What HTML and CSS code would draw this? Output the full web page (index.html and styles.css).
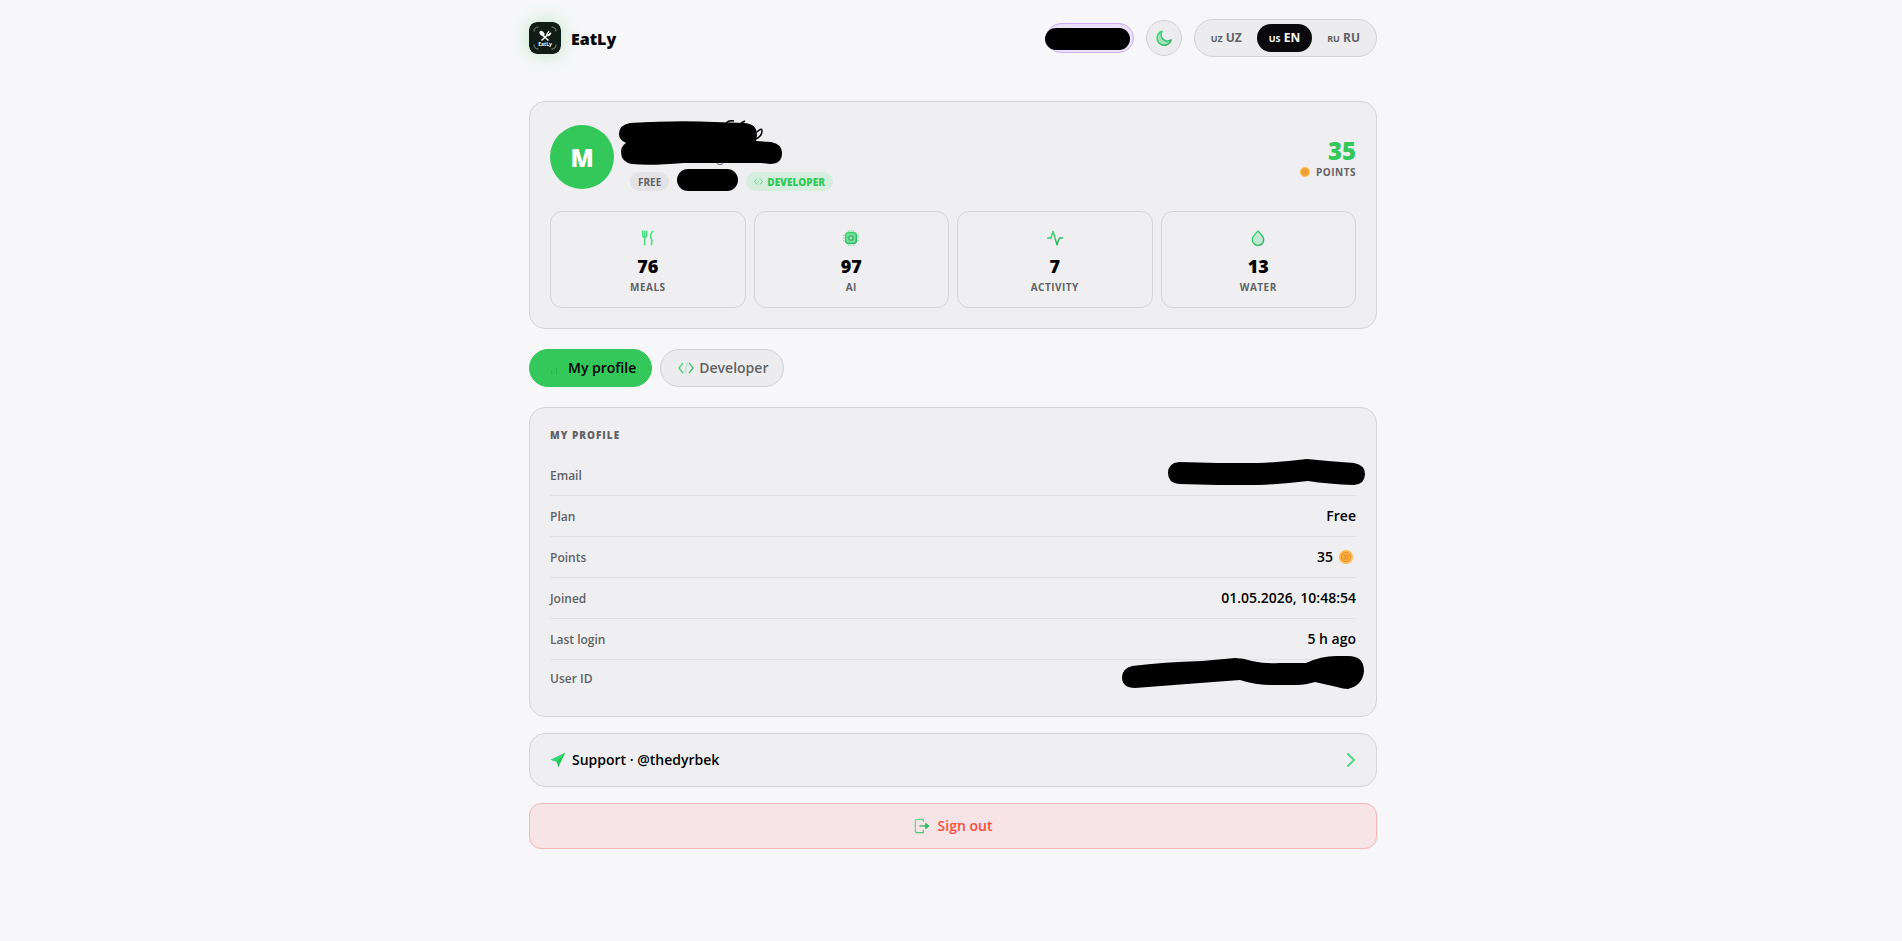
FILE: index.html
```html
<!DOCTYPE html>
<html lang="en">
<head>
<meta charset="utf-8">
<title>EatLy</title>
<link rel="stylesheet" href="styles.css">
</head>
<body>
<svg class="defs" width="0" height="0" aria-hidden="true">
  <defs>
    <linearGradient id="leaf" x1="0" y1="0" x2="24" y2="24" gradientUnits="userSpaceOnUse">
      <stop offset="0" stop-color="#4ade80"/><stop offset="1" stop-color="#22a855"/>
    </linearGradient>
    <symbol id="coin" viewBox="0 0 24 24">
      <circle cx="12" cy="12" r="12" fill="#ffb94a"/>
      <circle cx="12" cy="12" r="8" fill="#fbab40" stroke="#e08f2c" stroke-width="1.600"/>
      <path d="M8.500 9h7M9 9v6.500M12 9v6.500M15 9v6.500M8.500 15.500h7" fill="none" stroke="#e08f2c" stroke-width="1.400"/>
    </symbol>
    <symbol id="code" viewBox="0 0 24 24">
      <path d="M7 5 1.500 12 7 19M17 5l5.500 7-5.500 7" fill="none" stroke="url(#leaf)" stroke-opacity=".85" stroke-width="2.200" stroke-linecap="round" stroke-linejoin="round"/>
      <path d="M13.500 4.500l-3 15" fill="none" stroke="#4ade80" stroke-opacity=".35" stroke-width="2" stroke-linecap="round"/>
    </symbol>
  </defs>
</svg>
<div class="page">
  <header class="topbar">
    <a class="brand" href="#">
      <svg class="logo" viewBox="0 0 32 32" aria-hidden="true">
        <rect width="32" height="32" rx="8" fill="#101c16"/>
        <path d="M5 9.500Q5 5 9.500 5M22.500 5Q27 5 27 9.500M27 22.500Q27 27 22.500 27M9.500 27Q5 27 5 22.500" fill="none" stroke="#829088" stroke-width="1"/>
        <path d="M13 12.500l6.500 6M19 12.500l-6.500 6" stroke="#fff" stroke-width="1.500"/>
        <ellipse cx="13" cy="11.500" rx="2" ry="3" transform="rotate(-42 13 11.500)" fill="#fff"/>
        <path d="M17.500 12.500l2.600-3.300M18.700 13.600l3-3M17.500 12.500q1 2 3 .600l1.500-2" fill="none" stroke="#fff" stroke-width="1.200"/>
        <text class="logo-text" x="16" y="23.500" text-anchor="middle">EatLy</text>
      </svg>
      <span class="brand-name">EatLy</span>
    </a>
    <div class="tools">
      <span class="account"><svg class="ink account-ink" viewBox="0 0 86 22" aria-hidden="true"><rect width="85" height="22" rx="11"/></svg></span>
      <button class="theme" type="button" aria-label="Dark theme">
        <svg width="18" height="18" viewBox="0 0 24 24" aria-hidden="true"><path d="M9.500 3A9.500 9.500 0 1 0 21.500 14.500 8.500 8.500 0 0 1 9.500 3z" fill="#4ade80" fill-opacity=".45" stroke="url(#leaf)" stroke-width="2" stroke-linejoin="round"/></svg>
      </button>
      <div class="langs">
        <button class="lang" type="button"><small>UZ</small> UZ</button>
        <button class="lang lang-on" type="button"><small>US</small> EN</button>
        <button class="lang" type="button"><small>RU</small> RU</button>
      </div>
    </div>
  </header>

  <main>
    <section class="card summary">
      <div class="person">
        <div class="avatar">M</div>
        <div class="who">
          <div class="name"></div>
          <div class="mail"><span>@gmail.com</span></div>
          <div class="badges">
            <span class="badge">FREE</span>
            <span class="badge badge-hidden"><svg class="ink badge-ink" viewBox="0 0 61 22" aria-hidden="true"><rect width="61" height="22" rx="11"/></svg></span>
            <span class="badge badge-dev"><svg width="9" height="9" aria-hidden="true"><use href="#code"/></svg>DEVELOPER</span>
          </div>
          <svg class="ink who-ink" viewBox="0 0 164 46" aria-hidden="true">
            <path d="M11 3Q60 0 95 2l31 1q12 1 12 12l-1 6 15 1q11 2 11 11 0 11-12 11l-9-1H65Q30 46 13 44 2 42 2 32q0-6 5-9Q0 20 0 14 0 5 11 3z"/>
            <path d="M107 3q3-3 8-2M122 3l4-2M138 12q5-5 5-1 0 5-6 8" fill="none" stroke="#000" stroke-width="1.500"/>
          </svg>
        </div>
        <div class="score">
          <strong>35</strong>
          <span><svg width="10" height="10" aria-hidden="true"><use href="#coin"/></svg>POINTS</span>
        </div>
      </div>
      <div class="stats">
        <div class="stat">
          <svg viewBox="0 0 24 24" aria-hidden="true"><path d="M4 2v6q0 3 3 3t3-3V2M7 2v20M17 22q2-4 0-9-2-3-.500-7 1-3 2.500-4" fill="none" stroke="#4ade80" stroke-width="2.400" stroke-linecap="round" stroke-linejoin="round"/></svg>
          <strong>76</strong><span>MEALS</span>
        </div>
        <div class="stat">
          <svg viewBox="0 0 24 24" aria-hidden="true"><path d="M8 0v24M12 0v24M16 0v24M0 8h24M0 12h24M0 16h24" stroke="#4ade80" stroke-opacity=".8" stroke-width="1.400"/><rect x="4" y="4" width="16" height="16" rx="4" fill="#74dc98" stroke="url(#leaf)" stroke-width="2"/><rect x="9" y="9" width="6" height="6" rx="1.500" fill="#a5e8bb" stroke="#22a855" stroke-width="1.600"/></svg>
          <strong>97</strong><span>AI</span>
        </div>
        <div class="stat">
          <svg viewBox="0 0 24 24" aria-hidden="true"><path d="M1 12h5L9 2l6 20 3.500-10H23" fill="none" stroke="url(#leaf)" stroke-width="2.200" stroke-linecap="round" stroke-linejoin="round"/></svg>
          <strong>7</strong><span>ACTIVITY</span>
        </div>
        <div class="stat">
          <svg viewBox="0 0 24 24" aria-hidden="true"><path d="M12 1.500s-8.500 8-8.500 13a8.500 8.500 0 0 0 17 0c0-5-8.500-13-8.500-13z" fill="#4ade80" fill-opacity=".28" stroke="url(#leaf)" stroke-width="2"/></svg>
          <strong>13</strong><span>WATER</span>
        </div>
      </div>
    </section>

    <nav class="tabs">
      <button class="tab tab-on" type="button"><svg width="16" height="16" viewBox="0 0 24 24" aria-hidden="true"><path d="M7 16v6M14 12v10" stroke="#22a855" stroke-opacity=".7" stroke-width="1.500"/></svg>My profile</button>
      <button class="tab" type="button"><svg width="16" height="16" aria-hidden="true"><use href="#code"/></svg>Developer</button>
    </nav>

    <section class="card profile">
      <h2>MY PROFILE</h2>
      <dl>
        <div class="row"><dt>Email</dt><dd><svg class="ink mail-ink" viewBox="0 0 197 26" aria-hidden="true"><path d="M11 3L50 4H90Q115 3 139 0L160 2l26 2q11 2 11 11 0 10-11 11Q160 25 140 22 115 25 90 26H50L11 25Q0 24 0 14 0 4 11 3z"/></svg></dd></div>
        <div class="row"><dt>Plan</dt><dd>Free</dd></div>
        <div class="row"><dt>Points</dt><dd>35 <svg class="coin" width="14" height="14" aria-hidden="true"><use href="#coin"/></svg></dd></div>
        <div class="row"><dt>Joined</dt><dd>01.05.2026, 10:48:54</dd></div>
        <div class="row"><dt>Last login</dt><dd>5 h ago</dd></div>
        <div class="row row-id"><dt>User ID</dt><dd><svg class="ink id-ink" viewBox="0 0 242 33" aria-hidden="true"><path d="M10 10Q42 6 80 5l33-3q8 0 17 3 14 3 27 2h27q15-7 30-7h12q16 0 16 15-1 14-16 18-5 0-11-2l-22-5q-10 3-18 3h-25q-17 0-32-5L78 27 13 32Q0 32 0 21 0 13 10 10z"/></svg></dd></div>
      </dl>
    </section>

    <a class="card support" href="#">
      <svg width="16" height="16" viewBox="0 0 24 24" aria-hidden="true"><path d="M23 1 1 11.500l9 3L12.500 23z" fill="#22c55e"/><path d="M23 1 1 11.500l9 3z" fill="#36d873"/></svg>
      <span>Support · @thedyrbek</span>
      <svg class="chevron" width="10" height="16" viewBox="0 0 10 16" aria-hidden="true"><path d="M2 2l6 6-6 6" fill="none" stroke="#5bd384" stroke-width="2" stroke-linecap="round" stroke-linejoin="round"/></svg>
    </a>

    <button class="signout" type="button">
      <svg width="16" height="16" viewBox="0 0 24 24" aria-hidden="true"><path d="M14 6V2H5Q2 2 2 5v14q0 3 3 3h9v-4" fill="none" stroke="url(#leaf)" stroke-opacity=".8" stroke-width="1.800"/><path d="M8 12h14" stroke="#34b866" stroke-width="2"/><path d="M17.500 8l5 4-5 4z" fill="#34b866" stroke="#34b866" stroke-width="1.500" stroke-linejoin="round"/></svg>
      Sign out
    </button>
  </main>
</div>
</body>
</html>
```
FILE: styles.css
```css
* { box-sizing: border-box; }

body {
  margin: 0;
  min-height: 100vh;
  background: #f7f7f9;
  color: #000;
  font: 600 14px/18px "Open Sans", "Noto Sans", sans-serif;
}

button { font: inherit; color: inherit; cursor: pointer; }
a { color: inherit; text-decoration: none; }
svg { flex: none; }
.defs { position: absolute; }

.page {
  max-width: 880px;
  margin: 0 auto;
  padding: 19px 14px 32px 18px;
}

.topbar {
  display: flex;
  align-items: center;
  justify-content: space-between;
  margin-bottom: 44px;
}

.brand { display: flex; align-items: center; gap: 10px; }
.logo {
  width: 32px;
  height: 32px;
  border-radius: 8px;
  box-shadow: 0 0 20px rgba(52, 199, 89, .3);
}
.logo-text { font: 700 5px "Open Sans", sans-serif; fill: #fff; }
.brand-name { padding-top: 2px; font-size: 16px; font-weight: 800; line-height: 24px; }

.tools { display: flex; align-items: center; gap: 12px; }
.account {
  position: relative;
  width: 88px;
  height: 30px;
  border: 1px solid #cdaef8;
  border-radius: 15px;
  background: #ebe2fa;
}
.ink { position: absolute; fill: #000; }
.account-ink { left: -2px; top: 4px; width: 86px; height: 22px; }

.theme {
  display: grid;
  place-items: center;
  width: 36px;
  height: 36px;
  padding: 0;
  border: 1px solid #d2d2d5;
  border-radius: 50%;
  background: #ececee;
}

.langs {
  display: flex;
  gap: 3px;
  padding: 4px;
  border: 1px solid #d2d2d5;
  border-radius: 19px;
  background: #ececee;
}
.lang {
  height: 28px;
  padding: 1px 12px 0;
  border: 0;
  border-radius: 14px;
  background: none;
  color: #626265;
  font-size: 12px;
  font-weight: 700;
}
.lang small { font-size: 9px; }
.lang-on { background: #0a0a0c; color: #fff; }

.card {
  border: 1px solid #d5d5d8;
  border-radius: 16px;
  background: #efeff1;
  padding: 20px;
}

.person { display: flex; align-items: center; gap: 16px; margin-bottom: 20px; }
.avatar {
  display: grid;
  place-items: center;
  width: 64px;
  height: 64px;
  padding-top: 2px;
  border-radius: 50%;
  background: #34c759;
  color: #fff;
  font-size: 24px;
  font-weight: 800;
}
.who { position: relative; flex: 1; }
.name { height: 27px; }
.mail { height: 19px; padding-left: 76px; color: #626265; font-size: 12px; font-weight: 400; }
.who-ink { left: -11px; top: -2px; width: 164px; height: 46px; overflow: visible; }
.badges { display: flex; gap: 8px; margin-top: 4px; }
.badge {
  display: flex;
  align-items: center;
  gap: 4px;
  height: 19px;
  padding: 0 8px;
  border-radius: 10px;
  background: #e3e3e6;
  color: #626265;
  font-size: 10px;
  font-weight: 700;
}
.badge-hidden { position: relative; width: 61px; background: #e4dafa; }
.badge-ink { left: 0; top: -3px; width: 61px; height: 22px; }
.badge-dev { background: #d6eedd; color: #34c759; font-weight: 800; }

.score { display: grid; justify-items: end; padding-top: 6px; }
.score strong { color: #34c759; font-size: 24px; font-weight: 800; line-height: 24px; }
.score span {
  display: flex;
  align-items: center;
  gap: 6px;
  color: #626265;
  font-size: 10px;
  font-weight: 700;
  letter-spacing: .5px;
}

.stats { display: grid; grid-template-columns: repeat(4, 1fr); gap: 8px; }
.stat {
  display: grid;
  justify-items: center;
  padding: 18px 12px 11px;
  border: 1px solid #d5d5d8;
  border-radius: 12px;
}
.stat svg { width: 16px; height: 16px; }
.stat strong { margin-top: 8px; font-size: 18px; font-weight: 800; line-height: 24px; }
.stat span {
  margin-top: 1px;
  color: #626265;
  font-size: 10px;
  font-weight: 700;
  line-height: 17px;
  letter-spacing: .5px;
}

.tabs { display: flex; gap: 8px; margin: 20px 0; }
.tab {
  display: flex;
  align-items: center;
  gap: 5px;
  height: 38px;
  padding: 0 15px 0 17px;
  border: 1px solid #d2d2d5;
  border-radius: 19px;
  background: #ececee;
  color: #626265;
}
.tab-on { border-color: #34c759; background: #34c759; color: #000; }

.profile { padding-top: 18px; padding-bottom: 19px; }
.profile h2 {
  margin: 0 0 11px;
  color: #626265;
  font-size: 10px;
  font-weight: 800;
  line-height: 18px;
  letter-spacing: 1px;
}
.profile dl { margin: 0; }
.row {
  display: flex;
  align-items: center;
  justify-content: space-between;
  position: relative;
  height: 41px;
  border-bottom: 1px solid #e2e2e4;
}
.row dt { padding-top: 1px; color: #626265; font-size: 12px; }
.row dd { display: flex; align-items: center; gap: 6px; margin: 0; }
.row-id { height: 37px; border-bottom: 0; }
.coin { margin-right: 3px; }
.mail-ink { right: -9px; top: 4px; width: 197px; height: 26px; }
.id-ink { right: -8px; top: -4px; width: 242px; height: 33px; }

.support {
  display: flex;
  align-items: center;
  gap: 6px;
  height: 54px;
  margin: 16px 0;
  padding: 0 20px;
}
.chevron { margin-left: auto; }

.signout {
  display: flex;
  align-items: center;
  justify-content: center;
  gap: 8px;
  width: 100%;
  height: 46px;
  border: 1px solid #f5b5b2;
  border-radius: 12px;
  background: #f6e4e6;
  color: #ff4b40;
}
```
